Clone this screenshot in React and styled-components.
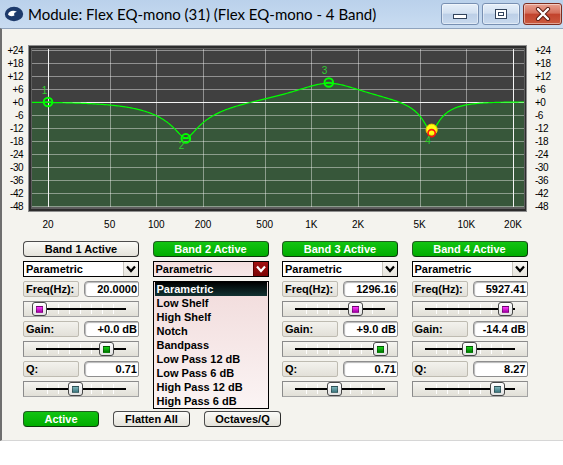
import React from "react";
import styled, { createGlobalStyle } from "styled-components";

const GlobalStyle = createGlobalStyle`
  html, body {
    margin: 0;
    padding: 0;
    background: #ffffff;
  }
  body {
    font-family: "Liberation Sans", Arial, sans-serif;
  }
`;

// ---- data ----

const bands = [
  { id: 1, active: false, freq: 20, freqText: "20.0000", gain: 0, gainText: "+0.0 dB", q: 0.71, qText: "0.71", label: [-3.5, -12] },
  { id: 2, active: true, open: true, freq: 155, freqText: "155.000", gain: -16.8, gainText: "-16.8 dB", q: 1.5, qText: "1.50", label: [-4.3, 7.5] },
  { id: 3, active: true, freq: 1296.16, freqText: "1296.16", gain: 9, gainText: "+9.0 dB", q: 0.71, qText: "0.71", label: [-4.3, -12.5] },
  { id: 4, active: true, selected: true, freq: 5927.41, freqText: "5927.41", gain: -14.4, gainText: "-14.4 dB", q: 8.27, drawQ: 2.5, qText: "8.27", label: [-3, 7.5] },
];

const filterTypes = [
  "Parametric",
  "Low Shelf",
  "High Shelf",
  "Notch",
  "Bandpass",
  "Low Pass 12 dB",
  "Low Pass 6 dB",
  "High Pass 12 dB",
  "High Pass 6 dB",
];

const dbMarks = [24, 18, 12, 6, 0, -6, -12, -18, -24, -30, -36, -42, -48];
const freqMarks = [
  [20, "20"], [50, "50"], [100, "100"], [200, "200"], [500, "500"],
  [1000, "1K"], [2000, "2K"], [5000, "5K"], [10000, "10K"], [20000, "20K"],
];

// ---- math ----

const FS = 48000;
const X0 = 48;
const DEC = 155;
const Y0 = 102;
const DBPX = 13 / 6;
const PLOT = { left: 32, right: 524, top: 49, bottom: 207 };

const fx = (f) => X0 + DEC * Math.log10(f / 20);
const dy = (db) => Y0 - db * DBPX;

function peakDb(f, f0, g, q) {
  const A = Math.pow(10, g / 40);
  const w0 = (2 * Math.PI * f0) / FS;
  const alpha = Math.sin(w0) / (2 * q);
  const cw = Math.cos(w0);
  const b0 = 1 + alpha * A, b1 = -2 * cw, b2 = 1 - alpha * A;
  const a0 = 1 + alpha / A, a1 = -2 * cw, a2 = 1 - alpha / A;
  const w = (2 * Math.PI * f) / FS;
  const c1 = Math.cos(w), s1 = Math.sin(w), c2 = Math.cos(2 * w), s2 = Math.sin(2 * w);
  const nr = b0 + b1 * c1 + b2 * c2, ni = -(b1 * s1 + b2 * s2);
  const dr = a0 + a1 * c1 + a2 * c2, di = -(a1 * s1 + a2 * s2);
  return 10 * Math.log10((nr * nr + ni * ni) / (dr * dr + di * di));
}

function curvePoints() {
  const pts = [];
  for (let x = PLOT.left; x <= PLOT.right; x += 1) {
    const f = 20 * Math.pow(10, (x - X0) / DEC);
    let db = 0;
    bands.forEach((b) => {
      db += peakDb(f, b.freq, b.gain, b.drawQ || b.q);
    });
    const y = Math.min(PLOT.bottom, Math.max(PLOT.top, dy(db)));
    pts.push(`${x},${y.toFixed(2)}`);
  }
  return pts;
}

const freqPos = (f) => 16.5 + (93.5 * Math.log10(f / 20)) / 3;
const gainPos = (g) => 83 + 1.72 * g;
const qPos = (q) => 52.75 + 30.7 * (Math.log10(q) - Math.log10(0.71));

// ---- window chrome ----

const Window = styled.div`
  width: 563px;
  display: flex;
  flex-direction: column;
`;

const TitleBar = styled.div`
  height: 28px;
  box-sizing: border-box;
  display: flex;
  align-items: flex-start;
  padding-left: 4px;
  background: linear-gradient(#bad1eb, #c9dcf1);
`;

const TitleIcon = styled.svg`
  margin-top: 6px;
  flex: none;
`;

const TitleText = styled.div`
  margin: 4px 0 0 4px;
  font-family: "Lato", "Liberation Sans", sans-serif;
  font-size: 15px;
  line-height: 20px;
  color: #000000;
  white-space: nowrap;
`;

const CaptionButtons = styled.div`
  margin-left: auto;
  margin-top: 3px;
  display: flex;
  gap: 3px;
  padding-right: 1px;
`;

const CaptionButton = styled.div`
  width: ${(p) => (p.$close ? 39 : 38)}px;
  height: 22px;
  box-sizing: border-box;
  border: 1px solid ${(p) => (p.$close ? "#7d2d20" : "#7890b2")};
  border-radius: 3px;
  display: flex;
  align-items: center;
  justify-content: center;
  background: ${(p) =>
    p.$close
      ? "linear-gradient(#e8a191 0%, #d5705c 45%, #c2432d 52%, #cb5a3f 100%)"
      : "linear-gradient(#e6eff9 0%, #d3e1f1 45%, #bccfe7 52%, #c9daee 100%)"};
  box-shadow: inset 0 0 0 1px rgba(255, 255, 255, 0.45);
`;

const Content = styled.div`
  height: 413px;
  box-sizing: border-box;
  border-top: 1px solid #8fa3bd;
  border-left: 2px solid #6e6e6e;
  border-bottom: 1px solid #d6d6d6;
  background: #f4f3ee;
  display: flex;
  flex-direction: column;
`;

// ---- controls ----

const Controls = styled.div`
  margin: 5px 0 0 21px;
  display: grid;
  grid-template-columns: repeat(4, 116px);
  column-gap: 13.5px;
`;

const BandColumn = styled.div`
  position: relative;
  display: flex;
  flex-direction: column;
  gap: 4px;
`;

const Covered = styled.div`
  display: flex;
  flex-direction: column;
  gap: 4px;
  visibility: ${(p) => (p.$hidden ? "hidden" : "visible")};
`;

const PillButton = styled.div`
  width: ${(p) => p.$width || 116}px;
  height: 16px;
  box-sizing: border-box;
  border-radius: 4px;
  border: 1px solid ${(p) => (p.$on ? "#1f5f1f" : "#4d4d4d")};
  border-bottom-color: ${(p) => (p.$on ? "#0b3a0b" : "#2a2a2a")};
  border-right-color: ${(p) => (p.$on ? "#0b3a0b" : "#2a2a2a")};
  background: ${(p) =>
    p.$on ? "linear-gradient(#12c412, #00ad00)" : "linear-gradient(#fbfbf8, #e4e2da)"};
  color: ${(p) => (p.$on ? "#ffffff" : "#000000")};
  font-size: 11px;
  font-weight: bold;
  line-height: 14px;
  text-align: center;
  white-space: nowrap;
`;

const Select = styled.div`
  height: 16px;
  box-sizing: border-box;
  border: 1px solid #000000;
  background: ${(p) => (p.$open ? "linear-gradient(#f3dede, #f7e8e8)" : "#ffffff")};
  display: flex;
  align-items: stretch;
`;

const SelectText = styled.div`
  flex: 1;
  padding-left: 2px;
  font-size: 11px;
  font-weight: bold;
  line-height: 14px;
  color: #000000;
`;

const SelectArrow = styled.div`
  width: 14px;
  display: flex;
  align-items: center;
  justify-content: center;
  border-left: 1px solid ${(p) => (p.$open ? "#5a0000" : "#c8c6be")};
  background: ${(p) => (p.$open ? "linear-gradient(#a31212, #7c0404)" : "linear-gradient(#f8f7f3, #e6e4dc)")};
`;

const FieldRow = styled.div`
  display: grid;
  grid-template-columns: 56px 55px;
  column-gap: 5px;
  height: 16px;
`;

const FieldLabel = styled.div`
  box-sizing: border-box;
  border: 1px solid #bebbb1;
  border-radius: 2px;
  background: linear-gradient(#f3f2ed, #e2e0d8);
  padding-left: 2px;
  font-size: 11px;
  font-weight: bold;
  line-height: 14px;
  color: #000000;
  white-space: nowrap;
`;

const FieldValue = styled.div`
  box-sizing: border-box;
  border: 1px solid #8e8e8e;
  border-radius: 4px 2px 2px 4px;
  background: #ffffff;
  box-shadow: inset 1px 1px 1px #b9b9b9;
  padding-right: 1px;
  text-align: right;
  font-size: 11px;
  font-weight: bold;
  line-height: 14px;
  color: #000000;
  white-space: nowrap;
`;

const SliderBox = styled.div`
  position: relative;
  height: 16px;
  box-sizing: border-box;
  border: 1px solid #a3a3a3;
  border-top-color: #8a8a8a;
  border-left-color: #8a8a8a;
  background: linear-gradient(#f5f4f0, #e1dfd7);
  display: flex;
  align-items: center;
  padding: 0 12px;
`;

const SliderTrack = styled.div`
  flex: 1;
  height: 10px;
  background:
    linear-gradient(#000000, #000000) center / 100% 2px no-repeat,
    repeating-linear-gradient(90deg, transparent 0 10px, #ffffff 10px 11px) 1px 0 / 81px 100% no-repeat;
`;

const Thumb = styled.div`
  position: absolute;
  top: 0;
  width: 15px;
  height: 14px;
  box-sizing: border-box;
  border: 1px solid #474747;
  border-radius: 3px;
  background: linear-gradient(#ffffff, #e2e2e2);
  display: flex;
  align-items: center;
  justify-content: center;
`;

const thumbColors = {
  freq: "linear-gradient(#ff3cff, #a400a4)",
  gain: "linear-gradient(#18d418, #007a00)",
  q: "linear-gradient(#7fb6bc, #3e7880)",
};

const ThumbDot = styled.div`
  width: 7px;
  height: 7px;
  box-sizing: border-box;
  border: 1px solid rgba(0, 0, 0, 0.35);
  background: ${(p) => thumbColors[p.$kind]};
`;

const DropList = styled.div`
  position: absolute;
  top: 40px;
  left: 0;
  width: 116px;
  height: 128px;
  box-sizing: border-box;
  border: 1px solid #000000;
  background: linear-gradient(#f1dbdb, #fbf4f4);
  padding: 0 1px;
  z-index: 2;
`;

const DropItem = styled.div`
  height: 14px;
  padding-left: 2px;
  font-size: 11px;
  font-weight: bold;
  line-height: 14px;
  white-space: nowrap;
  color: ${(p) => (p.$selected ? "#ffffff" : "#000000")};
  background: ${(p) => (p.$selected ? "linear-gradient(#000000, #123232)" : "transparent")};
`;

const BottomBar = styled.div`
  margin: 14px 0 0 21px;
  display: flex;
  gap: 14px;
`;

// ---- parts ----

const Chevron = ({ color }) => (
  <svg width="10" height="8" viewBox="0 0 10 8">
    <path d="M1 1.5 L5 6 L9 1.5" fill="none" stroke={color} strokeWidth="2.2" />
  </svg>
);

const Slider = ({ pos, kind }) => (
  <SliderBox>
    <SliderTrack />
    <Thumb style={{ left: `${(pos - 8.5).toFixed(1)}px` }}>
      <ThumbDot $kind={kind} />
    </Thumb>
  </SliderBox>
);

const Field = ({ label, value }) => (
  <FieldRow>
    <FieldLabel>{label}</FieldLabel>
    <FieldValue>{value}</FieldValue>
  </FieldRow>
);

const Band = ({ band }) => (
  <BandColumn>
    <PillButton $on={band.active}>Band {band.id} Active</PillButton>
    <Select $open={band.open}>
      <SelectText>Parametric</SelectText>
      <SelectArrow $open={band.open}>
        <Chevron color={band.open ? "#ffffff" : "#000000"} />
      </SelectArrow>
    </Select>
    {/* the open list hides these rows */}
    <Covered $hidden={band.open}>
      <Field label="Freq(Hz):" value={band.freqText} />
      <Slider pos={freqPos(band.freq)} kind="freq" />
      <Field label="Gain:" value={band.gainText} />
      <Slider pos={gainPos(band.gain)} kind="gain" />
      <Field label="Q:" value={band.qText} />
      <Slider pos={qPos(band.q)} kind="q" />
    </Covered>
    {band.open && (
      <DropList>
        {filterTypes.map((t, i) => (
          <DropItem key={t} $selected={i === 0}>
            {t}
          </DropItem>
        ))}
      </DropList>
    )}
  </BandColumn>
);

const EqGraph = () => {
  const pts = curvePoints();
  const fill = `M${PLOT.left},${PLOT.bottom} L${pts.join(" L")} L${PLOT.right},${PLOT.bottom} Z`;
  const line = `M${pts.join(" L")}`;
  const labelFont = { fontFamily: "Liberation Sans, Arial, sans-serif" };
  return (
    <svg width="561" height="207" viewBox="2 29 561 207" style={{ display: "block" }}>
      {/* frame */}
      <rect x="28" y="45" width="499" height="167" fill="#8e8e8e" />
      <rect x="29" y="46" width="497" height="165" fill="#2c2c2c" />
      <rect x="31" y="48" width="494" height="161" fill="#5e5e5e" />
      <rect x={PLOT.left} y={PLOT.top} width={PLOT.right - PLOT.left} height={PLOT.bottom - PLOT.top} fill="#404040" />
      <path d={fill} fill="#37573a" />
      {/* grid */}
      {dbMarks.map((d) => (
        <line
          key={d}
          x1={PLOT.left}
          x2={PLOT.right}
          y1={dy(d) + 0.5}
          y2={dy(d) + 0.5}
          stroke={d === 0 ? "#f4f4f4" : "rgba(255,255,255,0.42)"}
          strokeWidth="1"
        />
      ))}
      {freqMarks.map(([f]) => {
        const x = Math.round(fx(f)) + 0.5;
        const edge = f === 20 || f === 20000;
        return (
          <line
            key={f}
            x1={x}
            x2={x}
            y1={PLOT.top}
            y2={PLOT.bottom}
            stroke={edge ? "#f4f4f4" : "rgba(255,255,255,0.42)"}
            strokeWidth="1"
          />
        );
      })}
      <path d={line} fill="none" stroke="#00ff00" strokeWidth="1.2" />
      {/* band markers */}
      {bands.map((b) => {
        const cx = fx(b.freq);
        const cy = dy(b.gain);
        return (
          <g key={b.id}>
            {b.selected ? (
              <>
                <circle cx={cx + 0.5} cy={cy - 3.5} r="5.6" fill="#ffff10" stroke="#f2c200" strokeWidth="1" />
                <circle cx={cx + 0.5} cy={cy} r="3.6" fill="none" stroke="#ff1010" strokeWidth="1.6" />
              </>
            ) : (
              <>
                <circle cx={cx} cy={cy} r="4.3" fill="none" stroke="#00ff00" strokeWidth="2" />
                <line x1={cx - 3} x2={cx + 3} y1={cy} y2={cy} stroke="#00ff00" strokeWidth="1.4" />
              </>
            )}
            <text
              x={cx + b.label[0]}
              y={cy + b.label[1] + 3.5}
              fontSize="10"
              fill="#2fcf2f"
              textAnchor="middle"
              style={labelFont}
            >
              {b.id}
            </text>
          </g>
        );
      })}
      {/* dB scales */}
      {dbMarks.map((d) => {
        const t = d > 0 ? `+${d}` : d === 0 ? "+0" : `${d}`;
        return (
          <g key={`l${d}`}>
            <text x="23" y={dy(d) + 4} fontSize="10" letterSpacing="-0.5" textAnchor="end" fill="#000" style={labelFont}>
              {t}
            </text>
            <text x="535" y={dy(d) + 4} fontSize="10" letterSpacing="-0.5" fill="#000" style={labelFont}>
              {t}
            </text>
          </g>
        );
      })}
      {/* frequency scale */}
      {freqMarks.map(([f, t]) => (
        <text key={t} x={fx(f)} y="228" fontSize="10" textAnchor="middle" fill="#000" style={labelFont}>
          {t}
        </text>
      ))}
    </svg>
  );
};

export default function App() {
  return (
    <>
      <GlobalStyle />
      <Window>
        <TitleBar>
          <TitleIcon width="20" height="16" viewBox="0 0 20 16">
            <ellipse cx="10" cy="8" rx="9.2" ry="7.2" fill="#1d3a6b" />
            <path d="M4 8.5 C5 4.5 10 3.8 13 6 C11 6 9.5 7 10.5 9.5 C8 10.5 5.5 10.5 4 8.5 Z" fill="#ffffff" />
          </TitleIcon>
          <TitleText>Module: Flex EQ-mono (31) (Flex EQ-mono - 4 Band)</TitleText>
          <CaptionButtons>
            <CaptionButton>
              <svg width="16" height="12" viewBox="0 0 16 12">
                <rect x="1.5" y="6.5" width="13" height="4" fill="#ffffff" stroke="#33445c" />
              </svg>
            </CaptionButton>
            <CaptionButton>
              <svg width="14" height="12" viewBox="0 0 14 12">
                <rect x="1.5" y="1.5" width="11" height="9" fill="#ffffff" stroke="#33445c" />
                <rect x="4.5" y="4.5" width="5" height="3" fill="#ffffff" stroke="#33445c" />
              </svg>
            </CaptionButton>
            <CaptionButton $close>
              <svg width="16" height="14" viewBox="0 0 16 14">
                <path d="M3 2 L13 12 M13 2 L3 12" stroke="#5a1a10" strokeWidth="4.2" strokeLinecap="round" />
                <path d="M3 2 L13 12 M13 2 L3 12" stroke="#ffffff" strokeWidth="2.4" strokeLinecap="round" />
              </svg>
            </CaptionButton>
          </CaptionButtons>
        </TitleBar>
        <Content>
          <EqGraph />
          <Controls>
            {bands.map((b) => (
              <Band key={b.id} band={b} />
            ))}
          </Controls>
          <BottomBar>
            <PillButton $on $width={76}>Active</PillButton>
            <PillButton $width={77}>Flatten All</PillButton>
            <PillButton $width={77}>Octaves/Q</PillButton>
          </BottomBar>
        </Content>
      </Window>
    </>
  );
}
